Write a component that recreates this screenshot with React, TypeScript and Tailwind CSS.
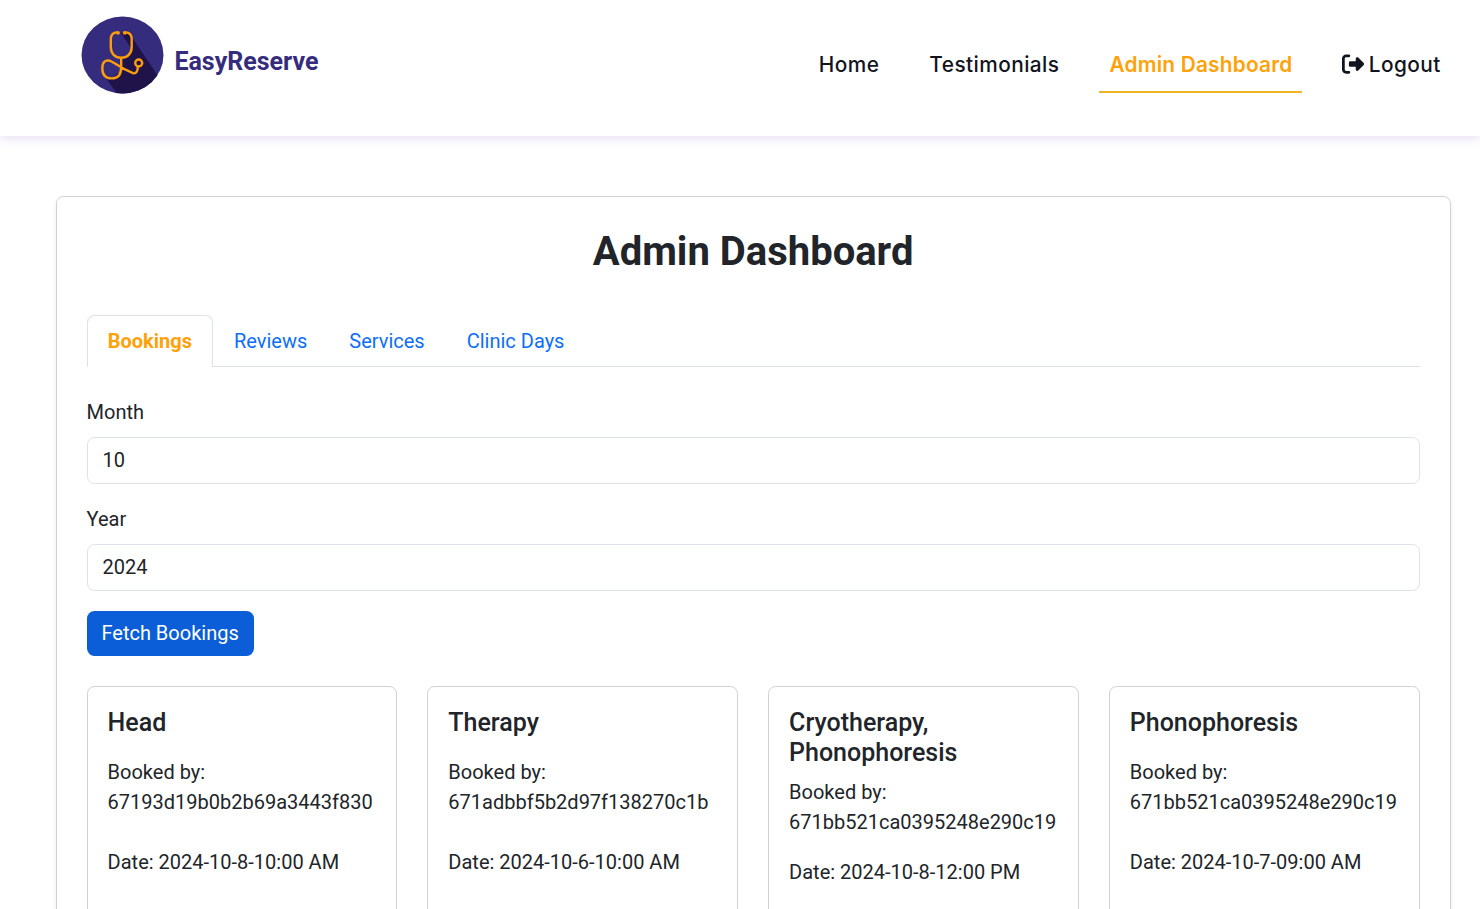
import React from "react";
import { FaRightFromBracket } from "react-icons/fa6";

const tabs = ["Reviews", "Services", "Clinic Days"];

const bookings = [
  { title: "Head", by: "67193d19b0b2b69a3443f830", date: "2024-10-8-10:00 AM" },
  { title: "Therapy", by: "671adbbf5b2d97f138270c1b", date: "2024-10-6-10:00 AM" },
  { title: "Cryotherapy, Phonophoresis", by: "671bb521ca0395248e290c19", date: "2024-10-8-12:00 PM", tall: true },
  { title: "Phonophoresis", by: "671bb521ca0395248e290c19", date: "2024-10-7-09:00 AM" },
];

function Logo() {
  return (
    <svg className="h-[78px] w-[83px]" viewBox="0 0 83 78" fill="none">
      <defs>
        <clipPath id="disc">
          <ellipse cx="41.5" cy="39" rx="41" ry="38.5" />
        </clipPath>
      </defs>
      <ellipse cx="41.5" cy="39" rx="41" ry="38.5" fill="#352c7e" />
      <path clipPath="url(#disc)" d="M40 17 L44 16 L50 20 L86 73 L60 82 L39 82 L23 59 L31 62 L39 56 L40 42 L48 38 L50 32 Z" fill="#20134a" />
      <g stroke="#fc9d0c" strokeWidth="2.4" strokeLinecap="round" strokeLinejoin="round">
        <path d="M36.500 16.500 C32 16 29.800 19 29.800 23 V31 C29.800 37.500 34 41.700 40.200 41.700 C46.400 41.700 50.700 37.500 50.700 31 V23 C50.700 19 48.500 16 44 16.500" />
        <path d="M40.200 42 V51 C40.200 59 37 62.400 31 62.400 C24.500 62.400 21.300 59 21.300 52.500 C21.300 46 24 43.800 29 44.800 C32 45.500 38 51.500 52 57.200 C55 58 56.800 55.500 56.800 51" />
        <circle cx="57.700" cy="47" r="3.500" />
      </g>
      <g fill="#fc9d0c">
        <circle cx="37" cy="16.800" r="1.900" />
        <circle cx="43.700" cy="16.800" r="1.900" />
      </g>
    </svg>
  );
}

function Field({ label, value }: { label: string; value: string }) {
  return (
    <label className="mb-5 block">
      <span className="mb-2.5 block leading-[30px]">{label}</span>
      <input
        defaultValue={value}
        className="block h-[47px] w-full rounded-[7.5px] border border-[#dee2e6] bg-white px-[15px] pb-px outline-none"
      />
    </label>
  );
}

export default function App() {
  return (
    <div className="h-[909px] overflow-hidden bg-white font-['Roboto',sans-serif] text-[20px] leading-[30px] text-[#212529]">
      <header className="flex h-[136px] justify-between pl-[81px] pr-[39.2px] shadow-[0_2px_10px_rgba(90,41,170,0.16)]">
        <div className="flex items-start pt-4">
          <Logo />
          <span className="ml-[10.4px] mt-[31px] text-[25px] font-bold text-[#352c7e]">EasyReserve</span>
        </div>
        <nav className="flex items-start pt-[37px] font-['Inter',sans-serif] text-[20.8px] font-medium tracking-[0.45px] text-[#12141d]">
          <a className="mr-[30px] px-2.5 pb-[11px] pt-[13px]">Home</a>
          <a className="mr-[30px] px-2.5 pb-[11px] pt-[13px]">Testimonials</a>
          <a className="mr-[39.3px] w-[203px] border-b-2 border-[#efb323] px-2.5 pb-[11px] pt-[13px] font-semibold tracking-[0.22px] text-[#ffa20a]">Admin Dashboard</a>
          <a className="flex items-center gap-[5px] pt-[13px]">
            <FaRightFromBracket className="-mt-[2px] size-[22px]" />
            Logout
          </a>
        </nav>
      </header>

      <main className="ml-[55.6px] mr-[29.4px] mt-[60px] h-[1000px] rounded-[7.5px] border border-[#d0d1d2] px-[30px] pt-[31px] shadow-[0_2px_5px_rgba(0,0,0,0.075)]">
        <h1 className="text-center text-[40px] font-bold leading-[48px]">Admin Dashboard</h1>

        <div className="mt-[39px] flex h-[52px] border-b border-[#dee2e6]">
          <a className="-mb-px flex w-[126.4px] items-center justify-center rounded-t-[7.5px] border border-b-0 border-[#dee2e6] bg-white pb-[2px] font-bold text-[#ffa20a]">Bookings</a>
          {tabs.map((tab) => (
            <a key={tab} className="flex items-center px-[21px] text-[#0d6efd]">{tab}</a>
          ))}
        </div>

        <form className="pt-[30px]">
          <Field label="Month" value="10" />
          <Field label="Year" value="2024" />
          <button type="button" className="block h-[45px] w-[167px] rounded-[7.5px] bg-[#0b5ed7] pb-[2px] text-white">Fetch Bookings</button>
        </form>

        <div className="mt-[30px] grid grid-cols-4 gap-[30px]">
          {bookings.map((b) => (
            <article key={b.title} className="h-[400px] rounded-[7.5px] border border-[#d0d1d2] px-5 pt-[21px]">
              <h2 className="text-[25px] font-medium leading-[30px]">{b.title}</h2>
              <p className={b.tall ? "mt-[9px]" : "mt-[19px]"}>Booked by: {b.by}</p>
              <p className={b.tall ? "mt-5" : "mt-[30px]"}>Date: {b.date}</p>
            </article>
          ))}
        </div>
      </main>
    </div>
  );
}
